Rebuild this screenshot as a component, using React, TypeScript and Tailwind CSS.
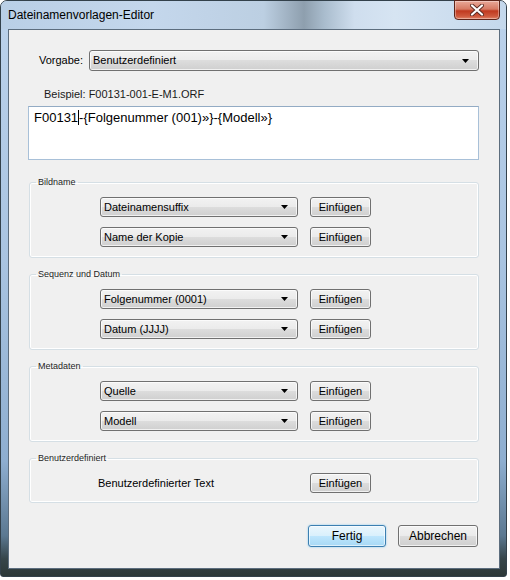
import type { ReactNode } from 'react';

// Win7-style dialog: glass frame, group boxes with combo + insert button rows

function Arrow() {
  return (
    <svg width="7" height="4" viewBox="0 0 7 4" className="shrink-0">
      <path d="M0 0h7L3.5 4z" fill="#000" />
    </svg>
  );
}

function Combo({ value, width, height = 20 }: { value: string; width: number; height?: number }) {
  return (
    <div
      className="flex items-center justify-between rounded-[3px] border border-[#707070] bg-[linear-gradient(to_bottom,#f2f2f2_0%,#ebebeb_50%,#dddddd_50%,#cfcfcf_100%)] pl-[3px] pr-[9px] text-[11px] text-black shadow-[inset_0_0_0_1px_rgba(255,255,255,0.7)]"
      style={{ width, height }}
    >
      <span className="leading-none">{value}</span>
      <Arrow />
    </div>
  );
}

function Btn({ children, primary = false, className = '' }: { children: ReactNode; primary?: boolean; className?: string }) {
  return (
    <button
      className={
        primary
          ? `flex items-center justify-center rounded-[3px] border border-[#3c7fb1] bg-[linear-gradient(to_bottom,#eaf6fd_0%,#d9f0fc_50%,#bee6fd_50%,#a7d9f5_100%)] text-black shadow-[inset_0_0_0_1px_rgba(255,255,255,0.6),0_0_2px_#7cc4ee] ${className}`
          : `flex items-center justify-center rounded-[3px] border border-[#707070] bg-[linear-gradient(to_bottom,#f2f2f2_0%,#ebebeb_50%,#dddddd_50%,#cfcfcf_100%)] text-black shadow-[inset_0_0_0_1px_rgba(255,255,255,0.7)] ${className}`
      }
    >
      {children}
    </button>
  );
}

function Group({ title, children }: { title: string; children: ReactNode }) {
  return (
    <fieldset className="ml-[20px] w-[450px] rounded-[3px] border border-[#d5dfe5] pb-[10px] shadow-[inset_0_0_0_1px_#ffffff]">
      <legend className="ml-[6px] px-[2px] text-[9px] leading-[12px] text-[#1e1e1e]">{title}</legend>
      {children}
    </fieldset>
  );
}

function InsertRow({ value, first = false }: { value: string; first?: boolean }) {
  return (
    <div className={`flex items-center gap-[12px] pl-[70px] ${first ? 'mt-[9px]' : 'mt-[10px]'}`}>
      <Combo value={value} width={198} />
      <Btn className="h-[20px] w-[61px] text-[11px]">Einfügen</Btn>
    </div>
  );
}

const groups = [
  { title: 'Bildname', rows: ['Dateinamensuffix', 'Name der Kopie'] },
  { title: 'Sequenz und Datum', rows: ['Folgenummer (0001)', 'Datum (JJJJ)'] },
  { title: 'Metadaten', rows: ['Quelle', 'Modell'] },
];

export default function App() {
  return (
    <div className="h-[580px] w-[510px] bg-white font-['Liberation_Sans',Arial,sans-serif]">
      <div className="flex h-[577px] w-[507px] flex-col rounded-t-[7px] rounded-b-[3px] border border-[#33414b] bg-[linear-gradient(to_bottom,#bcd3ec_0%,#a9c4e1_45%,#8eaed0_80%,#5b7891_93%,#36454a_97%,#2c3838_100%)]">
        {/* title bar */}
        <div className="relative flex h-[28px] shrink-0 items-center rounded-t-[6px] bg-[linear-gradient(to_right,#b9cfe6_0%,#c4d7ec_30%,#bccfe2_52%,#8e9fae_60%,#a9bccd_64%,#cfdeee_70%,#d6e4f2_78%,#c4d8ec_100%)] pl-[7px]">
          <span className="text-[12px] text-black">Dateinamenvorlagen-Editor</span>
          <div className="absolute right-[6px] top-[-1px] flex h-[20px] w-[46px] items-center justify-center rounded-b-[4px] border border-[#5e2419] bg-[linear-gradient(to_bottom,#e9a898_0%,#d67a64_45%,#c0391f_55%,#cf5a3e_85%,#e2856a_100%)] shadow-[inset_0_0_0_1px_rgba(255,255,255,0.35)]">
            <svg width="14" height="12" viewBox="0 0 14 12">
              <path d="M2 1.5l10 9M12 1.5l-10 9" stroke="#5a2a22" strokeWidth="4" strokeLinecap="round" />
              <path d="M2 1.5l10 9M12 1.5l-10 9" stroke="#ffffff" strokeWidth="2.2" strokeLinecap="round" />
            </svg>
          </div>
        </div>

        {/* client area */}
        <div className="ml-[7px] flex h-[540px] w-[492px] flex-col border border-[#5c6d7e] bg-[#f0f0f0]">
          <div className="mt-[20px] flex items-center">
            <span className="w-[80px] pr-[6px] text-right text-[11px] text-black">Vorgabe:</span>
            <Combo value="Benutzerdefiniert" width={390} height={21} />
          </div>

          <div className="mt-[16px] pl-[35px] text-[11px] leading-[14px] text-[#1a1a1a]">Beispiel: F00131-001-E-M1.ORF</div>

          <div className="ml-[19px] mt-[5px] h-[54px] w-[451px] border border-[#a8c0d8] border-t-[#93abc4] bg-white pl-[5px] pt-[3px] text-[13px] leading-[16px] text-black">
            F00131<span className="inline-block h-[15px] w-0 border-l border-black align-[-3px]" />-{'{'}Folgenummer (001)»{'}'}-{'{'}Modell»{'}'}
          </div>

          <div className="mt-[16px] flex flex-col gap-[10px]">
            {groups.map((g) => (
              <Group key={g.title} title={g.title}>
                {g.rows.map((r, i) => (
                  <InsertRow key={r} value={r} first={i === 0} />
                ))}
              </Group>
            ))}
            <fieldset className="ml-[20px] w-[450px] rounded-[3px] border border-[#d5dfe5] pb-[9px] shadow-[inset_0_0_0_1px_#ffffff]">
              <legend className="ml-[6px] px-[2px] text-[9px] leading-[12px] text-[#1e1e1e]">Benutzerdefiniert</legend>
              <div className="mt-[9px] flex items-center">
                <span className="w-[280px] pl-[68px] text-[11px] text-black">Benutzerdefinierter Text</span>
                <Btn className="h-[20px] w-[61px] text-[11px]">Einfügen</Btn>
              </div>
            </fieldset>
          </div>

          <div className="mt-[22px] flex justify-end gap-[12px] pr-[21px]">
            <Btn primary className="h-[22px] w-[78px] text-[12px]">Fertig</Btn>
            <Btn className="h-[22px] w-[80px] text-[12px]">Abbrechen</Btn>
          </div>
        </div>
      </div>
    </div>
  );
}
